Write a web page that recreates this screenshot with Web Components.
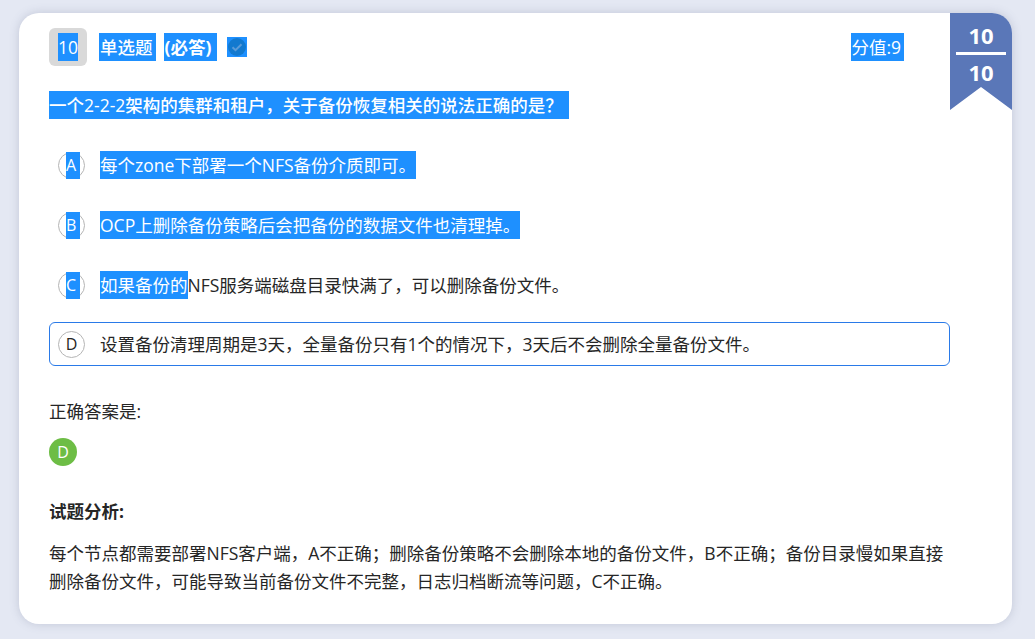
<!DOCTYPE html>
<html lang="zh">
<head>
<meta charset="utf-8">
<title>试题</title>
<style>
    html, body { margin: 0; height: 100%; }
    body {
        background: #e4e8f3;
        color: #262626;
        font: 17.5px/28px "Open Sans", "Noto Sans CJK SC", sans-serif;
        overflow: hidden;
    }
</style>
</head>
<body>
<exam-card>
    <score-ribbon slot="ribbon" got="10" total="10"></score-ribbon>
    <question-header index="10" score="9"></question-header>
    <question-title>一个2-2-2架构的集群和租户，关于备份恢复相关的说法正确的是？</question-title>
    <answer-option letter="A" picked><mark-text>每个zone下部署一个NFS备份介质即可。</mark-text></answer-option>
    <answer-option letter="B" picked><mark-text>OCP上删除备份策略后会把备份的数据文件也清理掉。</mark-text></answer-option>
    <answer-option letter="C" picked><mark-text>如果备份的</mark-text>NFS服务端磁盘目录快满了，可以删除备份文件。</answer-option>
    <answer-option letter="D" active>设置备份清理周期是3天，全量备份只有1个的情况下，3天后不会删除全量备份文件。</answer-option>
    <answer-result letter="D"></answer-result>
    <answer-analysis>每个节点都需要部署NFS客户端，A不正确；删除备份策略不会删除本地的备份文件，B不正确；备份目录慢如果直接删除备份文件，可能导致当前备份文件不完整，日志归档断流等问题，C不正确。</answer-analysis>
</exam-card>

<script>
    class MarkText extends HTMLElement {
        constructor() {
            super();
            this.attachShadow({ mode: 'open' });
            this.shadowRoot.innerHTML = `
                <style>
                    :host { display: inline-block; background: #1e90ff; color: #fff; }
                </style>
                <slot></slot>
            `;
        }
    }

    class ExamCard extends HTMLElement {
        constructor() {
            super();
            this.attachShadow({ mode: 'open' });
            this.shadowRoot.innerHTML = `
                <style>
                    :host {
                        display: block;
                        position: relative;
                        box-sizing: border-box;
                        width: 993px;
                        height: 611px;
                        margin: 13px 0 0 19px;
                        padding: 15px 62px 0 30px;
                        background: #fff;
                        border-radius: 20px;
                        box-shadow: 0 0 10px rgba(90, 100, 130, .25);
                    }
                </style>
                <slot name="ribbon"></slot>
                <slot></slot>
            `;
        }
    }

    class ScoreRibbon extends HTMLElement {
        constructor() {
            super();
            this.attachShadow({ mode: 'open' });
            this.shadowRoot.innerHTML = `
                <style>
                    :host {
                        position: absolute;
                        top: 0;
                        right: 0;
                        width: 62px;
                        height: 97px;
                        display: flex;
                        flex-direction: column;
                        align-items: center;
                        background: #5a77b8;
                        border-top-right-radius: 20px;
                        clip-path: polygon(0 0, 100% 0, 100% 100%, 50% 74px, 0 100%);
                        color: #fff;
                        font-weight: 700;
                        font-size: 22px;
                        font-family: "Open Sans", sans-serif;
                    }
                    .num { height: 39px; line-height: 44px; }
                    hr { width: 50px; height: 3px; margin: 0; border: 0; background: #fff; }
                    .num + hr + .num { line-height: 34px; }
                </style>
                <div class="num">${this.getAttribute('got')}</div>
                <hr>
                <div class="num">${this.getAttribute('total')}</div>
            `;
        }
    }

    class QuestionHeader extends HTMLElement {
        constructor() {
            super();
            this.attachShadow({ mode: 'open' });
            this.shadowRoot.innerHTML = `
                <style>
                    :host { display: flex; align-items: center; height: 38px; }
                    .sel { background: #1e90ff; color: #fff; height: 28px; white-space: nowrap; }
                    .idx {
                        width: 38px;
                        height: 38px;
                        border-radius: 6px;
                        background: #d9d9d9;
                        display: flex;
                        align-items: center;
                        justify-content: center;
                    }
                    .type { margin-left: 12px; padding: 0 3px 0 1px; font-weight: 500; }
                    .must { margin-left: 8px; padding: 0 6px 0 1px; font-weight: 700; }
                    .chk { margin-left: 10px; width: 20px; height: 20px; background: #1e90ff; }
                    svg { display: block; }
                    .score { margin-left: auto; margin-right: 46px; padding: 0 3px 0 0; }
                </style>
                <div class="idx"><span class="sel">${this.getAttribute('index')}</span></div>
                <span class="sel type">单选题</span>
                <span class="sel must">(必答)</span>
                <div class="chk">
                    <svg width="20" height="20" viewBox="0 0 20 20">
                        <circle cx="10" cy="10" r="9" fill="#1279cf"/>
                        <path d="M5.5 10.2l3 3 6-6" fill="none" stroke="#5a9bd8" stroke-width="2"/>
                    </svg>
                </div>
                <span class="sel score">分值:${this.getAttribute('score')}</span>
            `;
        }
    }

    class QuestionTitle extends HTMLElement {
        constructor() {
            super();
            this.attachShadow({ mode: 'open' });
            this.shadowRoot.innerHTML = `
                <style>
                    :host { display: block; margin-top: 25px; font-weight: 500; }
                    span { display: inline-block; background: #1e90ff; color: #fff; padding-right: 6px; }
                </style>
                <span><slot></slot></span>
            `;
        }
    }

    class AnswerOption extends HTMLElement {
        constructor() {
            super();
            const picked = this.hasAttribute('picked');
            this.attachShadow({ mode: 'open' });
            this.shadowRoot.innerHTML = `
                <style>
                    :host {
                        display: flex;
                        align-items: center;
                        gap: 15px;
                        box-sizing: border-box;
                        height: 44px;
                        margin-top: 16px;
                        padding: 0 8px;
                        border: 1px solid transparent;
                        border-radius: 6px;
                    }
                    :host([letter="A"]) { margin-top: 24px; }
                    :host([active]) { border-color: #2a7ae8; margin-top: 15px; }
                    .ball {
                        box-sizing: border-box;
                        flex: none;
                        width: 27px;
                        height: 27px;
                        border: 1px solid #b5b5b5;
                        border-radius: 50%;
                        display: flex;
                        justify-content: center;
                        font-size: 16px;
                        line-height: 25px;
                    }
                    .ball b { font-weight: 400; }
                    .ball.sel { justify-content: flex-start; }
                    /* selection box sticks out over the ring, not clipped */
                    .ball.sel b {
                        width: 10px;
                        margin: -1px 0 -1px 7px;
                        padding-right: 4px;
                        line-height: 27px;
                        text-align: center;
                        background: #1e90ff;
                        color: #fff;
                    }
                </style>
                <div class="ball ${picked ? 'sel' : ''}"><b>${this.getAttribute('letter')}</b></div>
                <div><slot></slot></div>
            `;
        }
    }

    class AnswerResult extends HTMLElement {
        constructor() {
            super();
            this.attachShadow({ mode: 'open' });
            this.shadowRoot.innerHTML = `
                <style>
                    :host { display: block; margin-top: 31px; }
                    .ball {
                        width: 28px;
                        height: 28px;
                        margin-top: 13px;
                        border-radius: 50%;
                        background: #6dbd45;
                        color: #fff;
                        font-size: 16px;
                        line-height: 28px;
                        text-align: center;
                    }
                </style>
                <div>正确答案是:</div>
                <div class="ball">${this.getAttribute('letter')}</div>
            `;
        }
    }

    class AnswerAnalysis extends HTMLElement {
        constructor() {
            super();
            this.attachShadow({ mode: 'open' });
            this.shadowRoot.innerHTML = `
                <style>
                    :host { display: block; margin-top: 31px; width: 900px; }
                    h4 { margin: 0 0 14px; font-size: 17.5px; line-height: 28px; font-weight: 700; }
                </style>
                <h4>试题分析:</h4>
                <slot></slot>
            `;
        }
    }

    customElements.define('mark-text', MarkText);
    customElements.define('exam-card', ExamCard);
    customElements.define('score-ribbon', ScoreRibbon);
    customElements.define('question-header', QuestionHeader);
    customElements.define('question-title', QuestionTitle);
    customElements.define('answer-option', AnswerOption);
    customElements.define('answer-result', AnswerResult);
    customElements.define('answer-analysis', AnswerAnalysis);
</script>
</body>
</html>
